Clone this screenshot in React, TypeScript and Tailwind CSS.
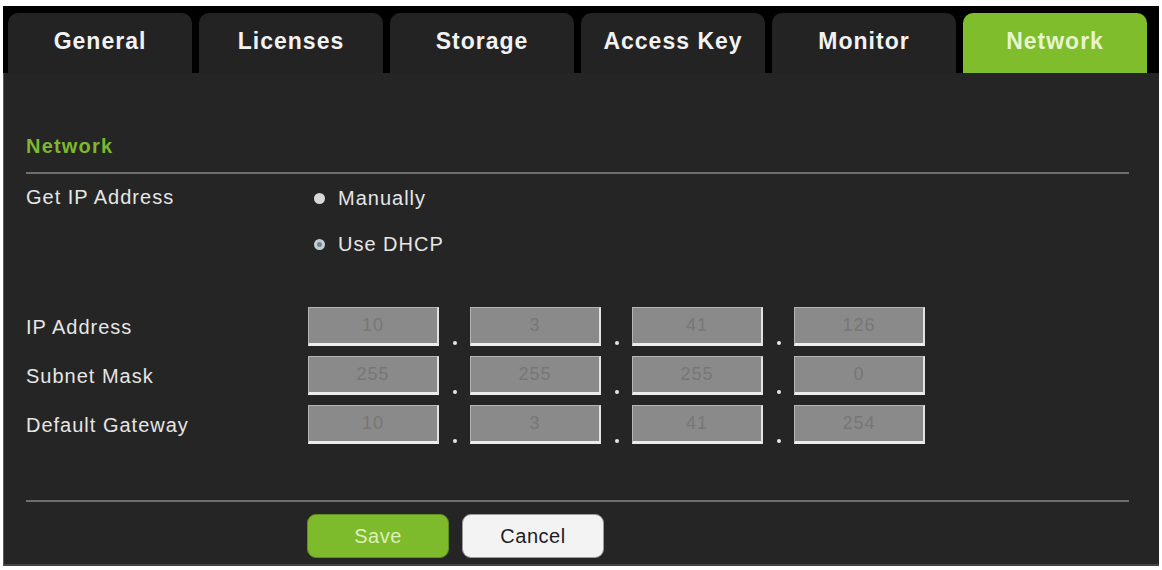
const tabs = ["General", "Licenses", "Storage", "Access Key", "Monitor", "Network"]

const rows = [
  { label: "IP Address", values: ["10", "3", "41", "126"] },
  { label: "Subnet Mask", values: ["255", "255", "255", "0"] },
  { label: "Default Gateway", values: ["10", "3", "41", "254"] },
]

function OctetBox({ value }: { value: string }) {
  return (
    <div className="w-[131px] h-[39px] bg-[#8a8a8a] border-t border-l border-[#b5b5b5] border-r-2 border-r-[#e2e2e2] border-b-[3px] border-b-[#ececec] flex items-center justify-center text-[18px] tracking-[1px] text-[#777777]">
      {value}
    </div>
  )
}

export default function App() {
  return (
    <div
      className="w-[1162px] h-[570px] bg-white pt-[6px] pl-[3px] pr-[3px] pb-[4px] flex flex-col"
      style={{ fontFamily: '"Liberation Sans", Arial, sans-serif' }}
    >
      {/* Tabs */}
      <div className="bg-black pl-[5px] pr-[10px] pt-[7px] flex gap-[7px]">
        {tabs.map((t) => (
          <div
            key={t}
            className={
              t === "Network"
                ? "w-[184px] h-[60px] rounded-t-[10px] bg-[#80bd2c] flex items-center justify-center text-[23px] tracking-[1px] font-bold text-[#e6f5cf] pb-[3px]"
                : "w-[184px] h-[60px] rounded-t-[10px] bg-[#232323] flex items-center justify-center text-[23px] tracking-[1px] font-bold text-[#f2f2f2] pb-[3px]"
            }
          >
            {t}
          </div>
        ))}
      </div>

      {/* Panel */}
      <div className="flex-1 bg-[#252525] border-l border-[#5a5a5a] border-b-2 border-b-[#444444] pl-[22px] pr-[30px] flex flex-col">
        <div className="pt-[61px] h-[99px] text-[20px] tracking-[1.2px] font-bold text-[#7cb82f] leading-[24px]">
          Network
        </div>
        <div className="h-[2px] bg-[#6e6e6e]" />

        {/* Get IP address */}
        <div className="flex pt-[11px]">
          <div className="w-[282px] text-[20px] tracking-[1px] text-[#e6e6e6] leading-[24px]">Get IP Address</div>
          <div className="flex flex-col gap-[22px] pt-[1px] text-[20px] tracking-[1px] text-[#e6e6e6]">
            <label className="flex items-center h-[24px]">
              <span className="ml-[6px] w-[11px] h-[11px] rounded-full bg-[#d8d8d8]" />
              <span className="ml-[13px]">Manually</span>
            </label>
            <label className="flex items-center h-[24px]">
              <span className="ml-[6px] w-[11px] h-[11px] rounded-full border-[3px] border-[#c4cdd2] bg-[#6b8796]" />
              <span className="ml-[13px]">Use DHCP</span>
            </label>
          </div>
        </div>

        {/* IP fields */}
        <div className="flex flex-col gap-[10px] pt-[51px]">
          {rows.map((r) => (
            <div key={r.label} className="flex items-center">
              <div className="w-[282px] text-[20px] tracking-[1px] text-[#e6e6e6]">{r.label}</div>
              <div className="flex items-end">
                {r.values.map((v, i) => (
                  <div key={i} className="flex items-end">
                    <OctetBox value={v} />
                    {i < 3 && (
                      <div className="w-[31px] flex justify-center pb-[1px]">
                        <span className="w-[4px] h-[4px] rounded-full bg-[#e8e8e8]" />
                      </div>
                    )}
                  </div>
                ))}
              </div>
            </div>
          ))}
        </div>

        <div className="h-[2px] bg-[#6e6e6e] mt-[56px]" />

        {/* Buttons */}
        <div className="flex gap-[13px] pl-[281px] pt-[12px]">
          <button className="w-[142px] h-[44px] rounded-[9px] bg-[#7dbb2c] border border-[#5f8f1f] text-[20px] tracking-[0.5px] text-[#dcf1b8]">
            Save
          </button>
          <button className="w-[142px] h-[44px] rounded-[9px] bg-[#f3f3f3] border border-[#9a9a9a] text-[20px] tracking-[0.5px] text-[#1e1e1e]">
            Cancel
          </button>
        </div>
      </div>
    </div>
  )
}
